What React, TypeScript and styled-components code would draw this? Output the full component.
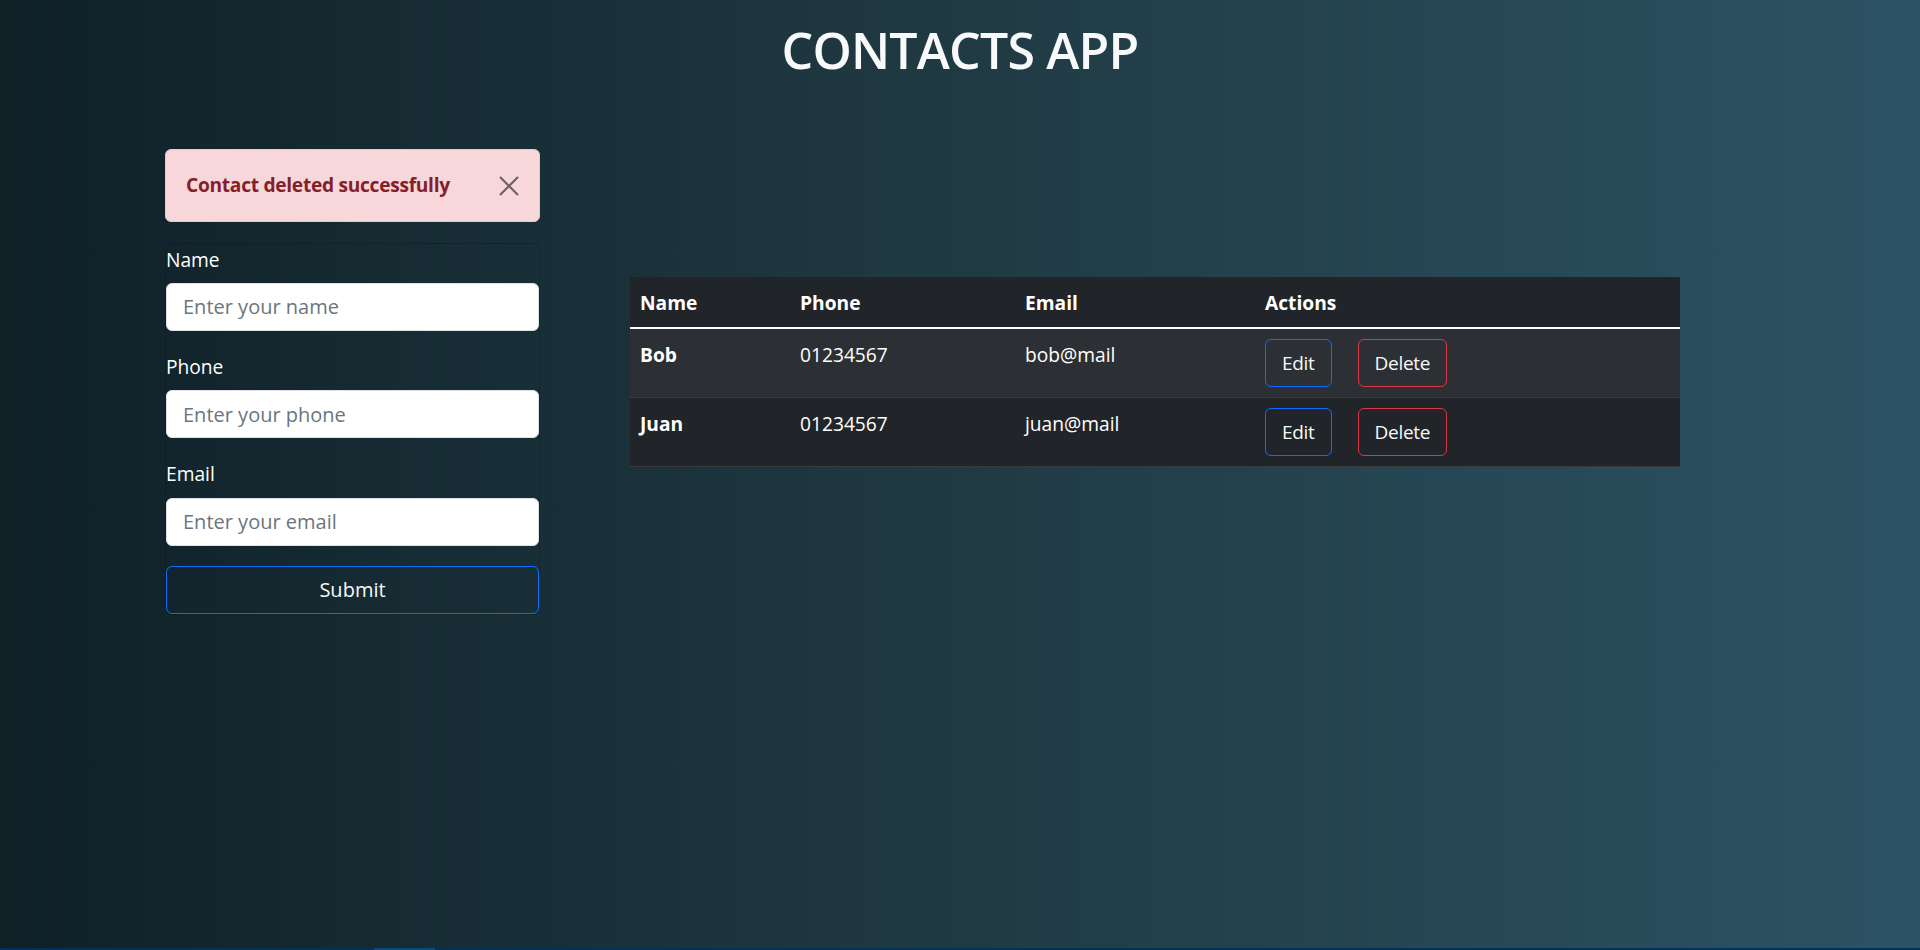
import React from "react";
import styled, { createGlobalStyle } from "styled-components";

const GlobalStyle = createGlobalStyle`
  html, body {
    margin: 0;
    padding: 0;
  }
  body {
    font-family: "Open Sans", "Noto Sans", sans-serif;
    font-size: 19.2px;
    line-height: 1.5;
    color: #fff;
    background: #0f2027;
  }
  * { box-sizing: border-box; }
`;

const Page = styled.div`
  min-height: 100vh;
  display: flex;
  flex-direction: column;
  background: linear-gradient(to right, #0f2027, #203a43, #2c5364);
`;

const Main = styled.main`
  flex: 1;
  display: flex;
  flex-direction: column;
`;

const Title = styled.h1`
  margin: 20px 0 0;
  font-size: 50px;
  font-weight: 600;
  line-height: 60px;
  letter-spacing: -0.8px;
  text-align: center;
  color: #f8f9fa;
`;

const Content = styled.div`
  display: flex;
  align-items: flex-start;
  gap: 90px;
  padding: 69px 0 0 165px;
`;

const Sidebar = styled.div`
  width: 375px;
  display: flex;
  flex-direction: column;
  gap: 21px;
`;

const Alert = styled.div`
  display: flex;
  align-items: center;
  justify-content: space-between;
  height: 73px;
  padding: 0 20px;
  background: #f8d7da;
  border: 1px solid #f5c2c7;
  border-radius: 6px;
  color: #842029;
  font-weight: 700;
  letter-spacing: -0.3px;
`;

const CloseButton = styled.button`
  display: flex;
  align-items: center;
  justify-content: center;
  width: 20px;
  height: 20px;
  padding: 0;
  border: 0;
  background: transparent;
  opacity: 0.55;
  cursor: pointer;
`;

const Card = styled.form`
  display: flex;
  flex-direction: column;
  border: 1px solid rgba(0, 0, 0, 0.175);
  border-radius: 6px;
`;

const Field = styled.div`
  display: flex;
  flex-direction: column;
  margin-bottom: 20.7px;
`;

const Label = styled.label`
  line-height: 28.8px;
  padding-top: 1.5px;
  margin-bottom: 8.5px;
  color: #fff;
`;

const Input = styled.input`
  height: 48px;
  padding: 8px 16px;
  font-family: inherit;
  font-size: 20px;
  color: #212529;
  background: #fff;
  border: 1px solid #dee2e6;
  border-radius: 6px;
  outline: none;
  &::placeholder {
    color: #6c757d;
  }
`;

const OutlineButton = styled.button<{ $tone: "primary" | "danger"; $block?: boolean }>`
  height: 48px;
  padding: 8px 16px;
  font-family: inherit;
  font-size: ${(p) => (p.$block ? "20px" : "19px")};
  letter-spacing: ${(p) => (p.$block ? "0" : "-0.3px")};
  line-height: 30px;
  color: #f8f9fa;
  background: transparent;
  border: 1px solid ${(p) => (p.$tone === "primary" ? "#0d6efd" : "#dc3545")};
  border-radius: 6px;
  cursor: pointer;
  width: ${(p) => (p.$block ? "100%" : "auto")};
`;

const TableWrap = styled.div`
  width: 1050px;
  margin-top: 128px;
`;

const Table = styled.table`
  width: 100%;
  border-collapse: collapse;
  table-layout: fixed;
  color: #fff;
  background: #212529;
`;

const HeadCell = styled.th`
  padding: 11px 8px 9px 10px;
  line-height: 30px;
  text-align: left;
  font-weight: 700;
  vertical-align: top;
`;

const Row = styled.tr<{ $striped: boolean }>`
  background: ${(p) => (p.$striped ? "#2c3034" : "#212529")};
  border-bottom: 1px solid #373b3e;
`;

const HeadRow = styled.tr`
  border-bottom: 2px solid #fff;
`;

const Cell = styled.td<{ $bold?: boolean }>`
  padding: 11px 8px 9px 10px;
  line-height: 30px;
  vertical-align: top;
  font-weight: ${(p) => (p.$bold ? 700 : 400)};
`;

const ActionCell = styled.td`
  padding: 10px 8px 10px 10px;
  vertical-align: top;
`;

const Actions = styled.div`
  display: flex;
  gap: 26px;
`;

const Footer = styled.div`
  height: 2px;
  background: #00325a;
  display: flex;
`;

const FooterThumb = styled.div`
  margin-left: 374px;
  width: 61px;
  background: #0a4a75;
`;

const CloseIcon = () => (
  <svg width="20" height="20" viewBox="0 0 20 20" fill="none">
    <path d="M1 1L19 19M19 1L1 19" stroke="#000" strokeWidth="2.2" />
  </svg>
);

const contacts = [
  { name: "Bob", phone: "01234567", email: "bob@mail" },
  { name: "Juan", phone: "01234567", email: "juan@mail" },
];

export default function App() {
  return (
    <>
      <GlobalStyle />
      <Page>
        <Main>
          <Title>CONTACTS APP</Title>
          <Content>
            <Sidebar>
              <Alert role="alert">
                <span>Contact deleted successfully</span>
                <CloseButton type="button" aria-label="Close">
                  <CloseIcon />
                </CloseButton>
              </Alert>
              <Card onSubmit={(e) => e.preventDefault()}>
                <Field>
                  <Label htmlFor="name">Name</Label>
                  <Input id="name" placeholder="Enter your name" />
                </Field>
                <Field>
                  <Label htmlFor="phone">Phone</Label>
                  <Input id="phone" placeholder="Enter your phone" />
                </Field>
                <Field>
                  <Label htmlFor="email">Email</Label>
                  <Input id="email" placeholder="Enter your email" />
                </Field>
                <OutlineButton type="submit" $tone="primary" $block>
                  Submit
                </OutlineButton>
              </Card>
            </Sidebar>
            <TableWrap>
              <Table>
                <colgroup>
                  <col style={{ width: 160 }} />
                  <col style={{ width: 225 }} />
                  <col style={{ width: 240 }} />
                  <col />
                </colgroup>
                <thead>
                  <HeadRow>
                    <HeadCell>Name</HeadCell>
                    <HeadCell>Phone</HeadCell>
                    <HeadCell>Email</HeadCell>
                    <HeadCell>Actions</HeadCell>
                  </HeadRow>
                </thead>
                <tbody>
                  {contacts.map((c, i) => (
                    <Row key={c.name} $striped={i % 2 === 0}>
                      <Cell $bold>{c.name}</Cell>
                      <Cell>{c.phone}</Cell>
                      <Cell>{c.email}</Cell>
                      <ActionCell>
                        <Actions>
                          <OutlineButton type="button" $tone="primary">Edit</OutlineButton>
                          <OutlineButton type="button" $tone="danger">Delete</OutlineButton>
                        </Actions>
                      </ActionCell>
                    </Row>
                  ))}
                </tbody>
              </Table>
            </TableWrap>
          </Content>
        </Main>
        <Footer>
          <FooterThumb />
        </Footer>
      </Page>
    </>
  );
}
